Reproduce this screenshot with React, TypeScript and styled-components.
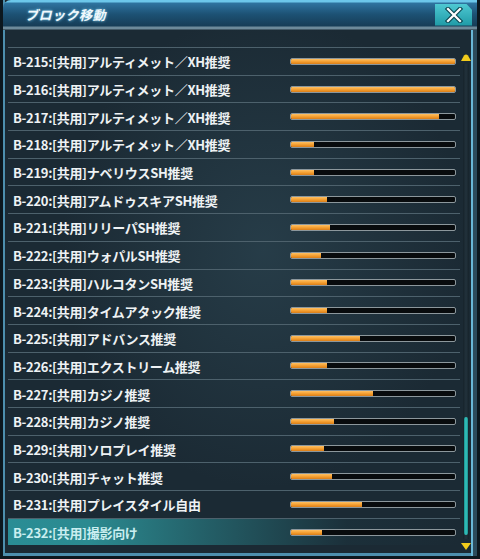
import React from "react";
import styled, { createGlobalStyle } from "styled-components";

interface BlockType {
  label: string;
  load: number;
}

const blocks: BlockType[] = [
  { label: "B-215:[共用]アルティメット／XH推奨", load: 100 },
  { label: "B-216:[共用]アルティメット／XH推奨", load: 100 },
  { label: "B-217:[共用]アルティメット／XH推奨", load: 90 },
  { label: "B-218:[共用]アルティメット／XH推奨", load: 14 },
  { label: "B-219:[共用]ナベリウスSH推奨", load: 14 },
  { label: "B-220:[共用]アムドゥスキアSH推奨", load: 22 },
  { label: "B-221:[共用]リリーパSH推奨", load: 24 },
  { label: "B-222:[共用]ウォパルSH推奨", load: 18 },
  { label: "B-223:[共用]ハルコタンSH推奨", load: 22 },
  { label: "B-224:[共用]タイムアタック推奨", load: 22 },
  { label: "B-225:[共用]アドバンス推奨", load: 42 },
  { label: "B-226:[共用]エクストリーム推奨", load: 22 },
  { label: "B-227:[共用]カジノ推奨", load: 50 },
  { label: "B-228:[共用]カジノ推奨", load: 26 },
  { label: "B-229:[共用]ソロプレイ推奨", load: 20 },
  { label: "B-230:[共用]チャット推奨", load: 25 },
  { label: "B-231:[共用]プレイスタイル自由", load: 43 },
  { label: "B-232:[共用]撮影向け", load: 19 },
];

function App() {
  const selected = blocks.length - 1;

  return (
    <>
      <GlobalStyle />
      <Window>
        <TitleBar>
          <Title>ブロック移動</Title>
          <CloseButton>
            <svg width="18" height="16" viewBox="0 0 18 16">
              <path
                d="M3 2 L15 14 M15 2 L3 14"
                stroke="#0f4a55"
                strokeWidth="4.5"
                strokeLinecap="square"
              />
              <path
                d="M3 2 L15 14 M15 2 L3 14"
                stroke="#ffffff"
                strokeWidth="2.2"
                strokeLinecap="square"
              />
            </svg>
          </CloseButton>
        </TitleBar>
        <Body>
          <List>
            {blocks.map((block, index) => (
              <Row key={block.label} isSelected={index === selected}>
                <RowLabel isSelected={index === selected}>{block.label}</RowLabel>
                <Bar>
                  <BarFill style={{ width: `${block.load}%` }} />
                </Bar>
              </Row>
            ))}
          </List>
          <ScrollBar>
            <Arrow>
              <svg width="10" height="7" viewBox="0 0 10 7">
                <path d="M0 7 L3 1.5 Q5 -0.5 7 1.5 L10 7 Z" fill="#f2cc1c" />
              </svg>
            </Arrow>
            <Track>
              <Thumb />
            </Track>
            <Arrow>
              <svg width="10" height="7" viewBox="0 0 10 7">
                <path d="M0 0 L10 0 L5 7 Z" fill="#f2cc1c" />
              </svg>
            </Arrow>
          </ScrollBar>
        </Body>
      </Window>
    </>
  );
}

const GlobalStyle = createGlobalStyle`
  body {
    margin: 0;
    background: #0a161d;
    font-family: "Noto Sans CJK JP", "Noto Sans", sans-serif;
  }
`;

const Window = styled.div`
  width: 480px;
  height: 559px;
  box-sizing: border-box;
  display: flex;
  flex-direction: column;
  background: radial-gradient(
      ellipse at 55% 45%,
      rgba(60, 95, 110, 0.35) 0%,
      rgba(27, 42, 52, 0) 55%
    ),
    #1b2a34;
  border-left: 3px solid #0c171e;
  border-right: 3px solid #0c171e;
  border-bottom: 3px solid #0c171e;
  box-shadow: inset 2px 0 0 #4d8fae, inset -4px 0 0 #2c4b5c,
    inset -6px 0 0 #6ab8d8, inset 0 -3px 0 #4d8fae;
  overflow: hidden;
`;

const TitleBar = styled.div`
  height: 30px;
  flex-shrink: 0;
  display: flex;
  align-items: center;
  justify-content: space-between;
  padding: 3px 5px 0 22px;
  box-sizing: border-box;
  background: linear-gradient(
    to bottom,
    #6cc7ea 0px,
    #6cc7ea 2px,
    #2f74a0 3px,
    #1d5275 14px,
    #173d57 26px,
    #6d8a9a 27px,
    #6d8a9a 29px,
    #1b2a34 30px
  );
  border-top-left-radius: 8px;
`;

const Title = styled.div`
  color: #f2f8fb;
  font-size: 13px;
  font-weight: bold;
  font-style: italic;
  letter-spacing: 0.5px;
  text-shadow: 0 0 3px #7fd0f0, 0 0 1px #2f7aa0;
  margin-top: -4px;
`;

const CloseButton = styled.div`
  width: 37px;
  height: 22px;
  margin-top: -4px;
  display: flex;
  align-items: center;
  justify-content: center;
  background: linear-gradient(to bottom, #4ec8d2, #1f9aa6);
  clip-path: polygon(0 0, 84% 0, 100% 28%, 100% 100%, 0 100%);
`;

const Body = styled.div`
  flex: 1;
  display: flex;
  padding: 17px 5px 0 5px;
`;

const List = styled.div`
  flex: 1;
  display: flex;
  flex-direction: column;
`;

const Row = styled.div<{ isSelected: boolean }>`
  height: 27.7px;
  box-sizing: border-box;
  display: grid;
  grid-template-columns: 1fr 166px;
  align-items: center;
  padding: 0 4px 0 5px;
  border-top: 1px solid #4d616c;
  background: ${(p) =>
    p.isSelected
      ? "linear-gradient(to right, #2a8d95 0%, #2b8a90 18%, rgba(38, 110, 118, 0.75) 45%, rgba(30, 70, 82, 0.2) 75%, rgba(27, 42, 52, 0) 100%)"
      : "transparent"};
`;

const RowLabel = styled.div<{ isSelected: boolean }>`
  color: ${(p) => (p.isSelected ? "#c9eef0" : "#eef2f4")};
  font-size: 13px;
  letter-spacing: -0.3px;
  font-weight: bold;
  white-space: nowrap;
  margin-top: 1px;
`;

const Bar = styled.div`
  height: 7px;
  box-sizing: border-box;
  border: 1px solid #8c979c;
  border-radius: 2px;
  background: #080b0d;
  overflow: hidden;
`;

const BarFill = styled.div`
  height: 100%;
  background: linear-gradient(to bottom, #ffc062, #f29a2a 60%, #d97e1a);
`;

const ScrollBar = styled.div`
  width: 12px;
  display: flex;
  flex-direction: column;
  align-items: center;
  padding: 6px 0 6px;
`;

const Arrow = styled.div`
  height: 8px;
  display: flex;
  align-items: center;
  justify-content: center;
`;

const Track = styled.div`
  flex: 1;
  width: 6px;
  margin: 3px 0;
  position: relative;
  background: linear-gradient(to right, #16232b, #22323c, #16232b);
`;

const Thumb = styled.div`
  position: absolute;
  left: 1px;
  width: 4px;
  bottom: 4px;
  height: 118px;
  border-radius: 2px;
  background: linear-gradient(to right, #1a8d8e, #36c7c0, #1a8d8e);
`;

export default App;
